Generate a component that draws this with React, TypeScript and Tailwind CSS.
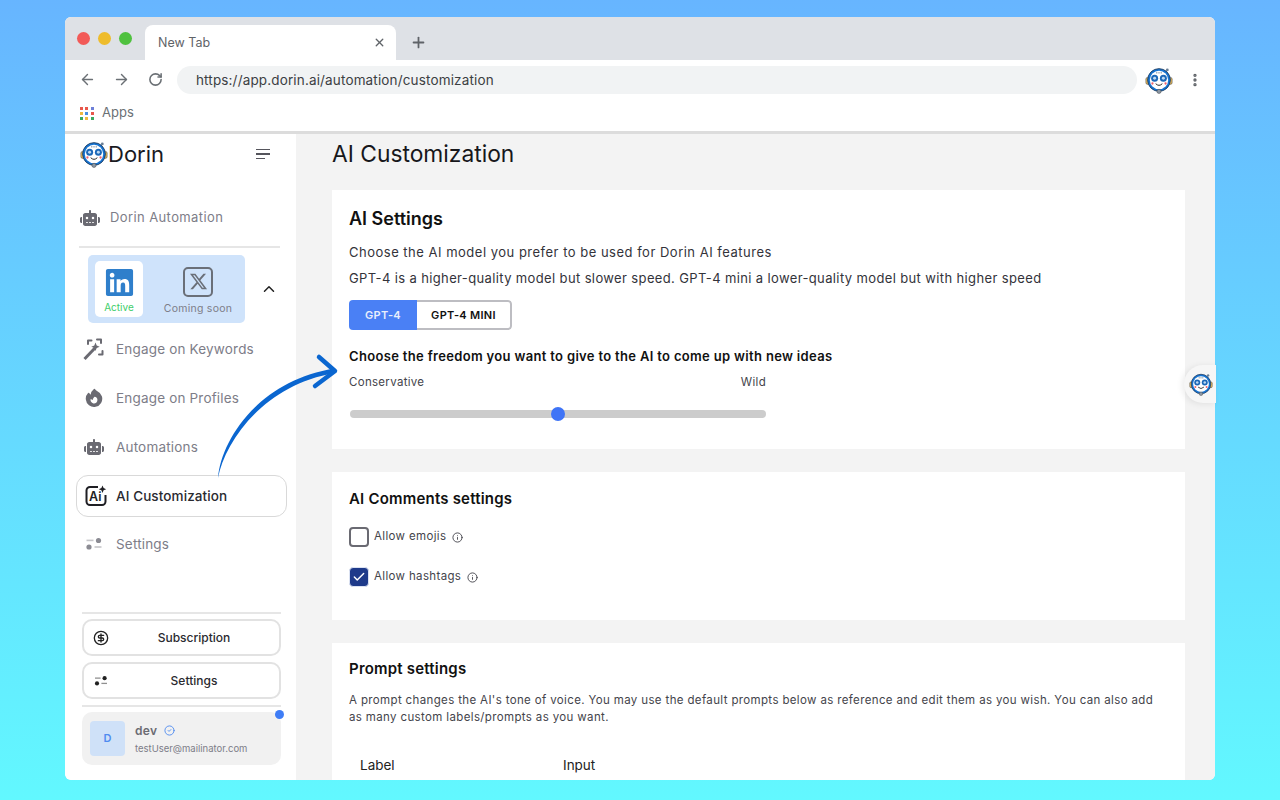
import React from "react";
import { ArrowLeft, ArrowRight, Check, ChevronUp, CircleCheck, CircleDollarSign, Info, MoreVertical, Plus, RotateCw, X } from "lucide-react";
import { FaLinkedin, FaRobot, FaXTwitter } from "react-icons/fa6";
import { HiFire } from "react-icons/hi2";

const font = "font-['Inter','Noto_Sans',sans-serif]";

const Robot = ({ size }: { size: number }) => (
  <svg width={size} height={size} viewBox="0 0 32 32" className="shrink-0">
    <circle cx="25.500" cy="4.500" r="1.600" fill="#6b7f95" />
    <rect x="1" y="13" width="4" height="8" rx="2" fill="#e8b95a" stroke="#444" strokeWidth="0.6" />
    <rect x="27" y="13" width="4" height="8" rx="2" fill="#e8b95a" stroke="#444" strokeWidth="0.6" />
    <circle cx="16" cy="16" r="13" fill="#1673d1" stroke="#1c3a5e" strokeWidth="1" />
    <circle cx="16" cy="16" r="10.500" fill="#fff" />
    <circle cx="13.500" cy="7.800" r="0.700" fill="#44607c" />
    <circle cx="16" cy="7.800" r="0.700" fill="#44607c" />
    <circle cx="18.500" cy="7.800" r="0.700" fill="#44607c" />
    <circle cx="11" cy="14" r="4" fill="#1c68b8" />
    <circle cx="21" cy="14" r="4" fill="#1c68b8" />
    <circle cx="11" cy="14" r="1.700" fill="#bcd8f2" />
    <circle cx="21" cy="14" r="1.700" fill="#bcd8f2" />
    <circle cx="8.500" cy="20" r="1.300" fill="#f0616d" />
    <circle cx="23.500" cy="20" r="1.300" fill="#f0616d" />
    <path d="M12.500 20.500 Q16 24 19.500 20.500" fill="none" stroke="#222" strokeWidth="1.100" strokeLinecap="round" />
    <circle cx="16" cy="29" r="2.400" fill="#8b98a6" stroke="#444" strokeWidth="0.6" />
  </svg>
);

const SettingsGlyph = ({ color, size = 20 }: { color: string; size?: number }) => (
  <svg width={size} height={size} viewBox="0 0 20 20" className="shrink-0">
    <circle cx="14.500" cy="6.500" r="2.600" fill={color} />
    <circle cx="5" cy="13" r="2.600" fill={color} />
    <rect x="2.500" y="5.600" width="7" height="1.600" fill={color} opacity="0.5" />
    <rect x="10.500" y="12.200" width="7" height="1.600" fill={color} opacity="0.5" />
  </svg>
);

const WandGlyph = () => (
  <svg width="24" height="24" viewBox="0 0 24 24" fill="none" stroke="#6a6a72" className="shrink-0">
    <path d="M2.500 22 L13 11" strokeWidth="3" />
    <path d="M6 7V3.500H9.500M15 2.500h4V6M20.500 14v3.500H17" strokeWidth="2" strokeLinecap="round" strokeLinejoin="round" />
    <path d="M13.500 5.500l1.200 3 3 1.200-3 1.200-1.200 3-1.200-3-3-1.200 3-1.200z" fill="#6a6a72" stroke="none" />
  </svg>
);

const AiGlyph = () => (
  <svg width="22" height="22" viewBox="0 0 22 22" fill="none" className="shrink-0">
    <path d="M13 2H5a3.500 3.500 0 0 0-3.500 3.500v11A3.500 3.500 0 0 0 5 20h12a3.500 3.500 0 0 0 3.500-3.500V10" stroke="#1f1f24" strokeWidth="2" />
    <path d="M17.500 0.500l1.100 2.600 2.600 1.100-2.600 1.100-1.100 2.600-1.100-2.600-2.600-1.100 2.600-1.100z" fill="#1f1f24" />
    <text x="4" y="16" fontSize="12.500" fontWeight="600" fill="#1f1f24" fontFamily="Inter">Ai</text>
  </svg>
);

const AppsGrid = () => {
  const colors = ["#e8574c", "#e8574c", "#6d7fd8", "#f1b93e", "#4a90e2", "#e8574c", "#3aa860", "#f1b93e", "#3aa860"];
  return (
    <div className="grid grid-cols-3 gap-[2px] w-[14px]">
      {colors.map((c, i) => (
        <span key={i} className="w-[3px] h-[3px]" style={{ backgroundColor: c }} />
      ))}
    </div>
  );
};

const NavItem = ({ icon, label, mt }: { icon: React.ReactNode; label: string; mt: string }) => (
  <div className={`flex items-center gap-[11px] h-[26px] pl-[17px] ${mt}`}>
    <span className="w-[23px] flex justify-center">{icon}</span>
    <span className="text-[13.500px] text-[#7d7d88] tracking-[0.18px]">{label}</span>
  </div>
);

const Sidebar = () => (
  <aside className="w-[231px] shrink-0 bg-white flex flex-col rounded-bl-[6px]">
    <div className="flex items-center justify-between h-[40px] pl-[15px] pr-[26px]">
      <div className="flex items-center">
        <Robot size={28} />
        <span className="text-[22px] text-[#1a1a1f]">Dorin</span>
      </div>
      <div className="flex flex-col gap-[3px] items-start w-[14px]">
        <span className="w-[14px] h-[1.500px] bg-[#55555c]" />
        <span className="w-[14px] h-[1.500px] bg-[#55555c]" />
        <span className="w-[9px] h-[1.500px] bg-[#55555c]" />
      </div>
    </div>
    <div className="flex items-center gap-[10px] pl-[15px] h-[26px] mt-[31px]">
      <FaRobot className="text-[#6a6a72] text-[20px]" />
      <span className="text-[13px] text-[#7d7d88] tracking-[0.4px]">Dorin Automation</span>
    </div>
    <div className="ml-[14px] mr-[16px] mt-[15px] h-[2px] bg-[#e6e6e6]" />
    <div className="flex items-center mt-[7px] pl-[23px]">
      <div className="w-[157px] h-[68px] rounded-[5px] bg-[#cfe3fb] flex items-center pl-[7px]">
        <div className="w-[48px] h-[56px] bg-white rounded-[5px] flex flex-col items-center pt-[6px]">
          <FaLinkedin className="text-[#2f7fcb] text-[31px] leading-none" />
          <span className="text-[10px] text-[#3fce6a] mt-[2px]">Active</span>
        </div>
        <div className="flex-1 flex flex-col items-center pt-[5px] ml-[8px]">
          <div className="w-[30px] h-[30px] rounded-[5px] border-2 border-[#6a6f78] flex items-center justify-center">
            <FaXTwitter className="text-[#6a6f78] text-[19px]" />
          </div>
          <span className="text-[10.500px] text-[#7d7d88] mt-[4px] tracking-[0.25px]">Coming soon</span>
        </div>
      </div>
      <ChevronUp className="ml-[15px] text-[#222] w-[18px] h-[18px]" />
    </div>
    <NavItem icon={<WandGlyph />} label="Engage on Keywords" mt="mt-[13px]" />
    <NavItem icon={<HiFire className="text-[#6a6a72] text-[22px]" />} label="Engage on Profiles" mt="mt-[23px]" />
    <NavItem icon={<FaRobot className="text-[#6a6a72] text-[20px]" />} label="Automations" mt="mt-[23px]" />
    <div className="ml-[11px] mr-[9px] mt-[15px] h-[42px] rounded-[12px] border border-[#d9d9d9] flex items-center gap-[9px] pl-[8px]">
      <AiGlyph />
      <span className="text-[13.500px] font-medium text-[#2a2a30] tracking-[0.1px]">AI Customization</span>
    </div>
    <NavItem icon={<SettingsGlyph color="#8b8b93" />} label="Settings" mt="mt-[14px]" />
    <div className="ml-[17px] mr-[15px] mt-[55px] h-[2px] bg-[#e6e6e6]" />
    <div className="ml-[17px] mr-[15px] mt-[5px] h-[37px] rounded-[10px] border-2 border-[#e2e2e2] flex items-center relative justify-center">
      <CircleDollarSign className="absolute left-[9px] w-[16px] h-[16px] text-[#222]" />
      <span className="text-[12px] font-medium text-[#2a2a30] ml-[25px]">Subscription</span>
    </div>
    <div className="ml-[17px] mr-[15px] mt-[6px] h-[37px] rounded-[10px] border-2 border-[#e2e2e2] flex items-center relative justify-center">
      <span className="absolute left-[9px] flex"><SettingsGlyph color="#222" size={16} /></span>
      <span className="text-[12px] font-medium text-[#2a2a30] ml-[25px]">Settings</span>
    </div>
    <div className="ml-[17px] mr-[15px] mt-[6px] h-[2px] bg-[#e6e6e6]" />
    <div className="ml-[17px] mr-[15px] mt-[5px] h-[53px] rounded-[10px] bg-[#f1f1f1] flex items-center gap-[10px] pl-[8px] relative">
      <div className="w-[35px] h-[35px] rounded-[4px] bg-[#cfe1f8] flex items-center justify-center text-[11px] font-semibold text-[#4f8bf0]">D</div>
      <div className="flex flex-col">
        <div className="flex items-center gap-[7px] mt-[1px]">
          <span className="text-[12px] font-semibold text-[#6b6b73] tracking-[0.3px]">dev</span>
          <CircleCheck className="w-[11px] h-[11px] text-[#4f8bf0]" />
        </div>
        <span className="text-[9.500px] text-[#7d7d88] mt-[2px]">testUser@mailinator.com</span>
      </div>
      <span className="absolute right-[-3px] top-[-2px] w-[9px] h-[9px] rounded-full bg-[#3f7df6]" />
    </div>
  </aside>
);

const Main = () => (
  <main className="flex-1 bg-[#f3f3f3] pl-[36px] pr-[30px] overflow-hidden">
    <h1 className="text-[22.800px] leading-[36px] text-[#17171b] mt-[2px]">AI Customization</h1>
    <section className="bg-white mt-[18px] h-[259px] px-[17px] pt-[17px]">
      <h2 className="text-[18px] leading-[24px] font-semibold text-[#111]">AI Settings</h2>
      <p className="text-[13px] leading-[20px] text-[#33333a] mt-[11px] tracking-[0.5px]">Choose the AI model you prefer to be used for Dorin AI features</p>
      <p className="text-[13px] leading-[20px] text-[#33333a] mt-[6px] tracking-[0.37px]">GPT-4 is a higher-quality model but slower speed. GPT-4 mini a lower-quality model but with higher speed</p>
      <div className="flex mt-[12px] w-[163px] h-[30px] rounded-[4px] overflow-hidden">
        <div className="w-[68px] bg-[#4a80f5] flex items-center justify-center text-[11px] font-semibold text-[#e8eefc] tracking-[0.3px]">GPT-4</div>
        <div className="flex-1 border-2 border-l-0 border-[#bdbdc2] rounded-r-[4px] flex items-center justify-center text-[11px] font-semibold text-[#111] tracking-[0.3px]">GPT-4 MINI</div>
      </div>
      <p className="text-[13px] leading-[20px] font-semibold text-[#111] mt-[16px] tracking-[0.33px]">Choose the freedom you want to give to the AI to come up with new ideas</p>
      <div className="flex justify-between w-[417px] mt-[8px] text-[11.500px] leading-[16px] text-[#44444b] tracking-[0.3px]">
        <span>Conservative</span>
        <span>Wild</span>
      </div>
      <div className="w-[416px] h-[8px] ml-[1px] mt-[20px] rounded-full bg-[#cccccc] relative">
        <span className="absolute left-[201px] top-[-3px] w-[14px] h-[14px] rounded-full bg-[#3f74f6]" />
      </div>
    </section>
    <section className="bg-white mt-[23px] h-[148px] px-[17px] pt-[16px]">
      <h2 className="text-[15px] leading-[22px] font-semibold text-[#111] tracking-[0.2px]">AI Comments settings</h2>
      <div className="flex items-center mt-[17px] h-[20px]">
        <span className="w-[20px] h-[20px] rounded-[4px] border-2 border-[#6a6a72]" />
        <span className="text-[11.500px] text-[#44444b] ml-[5px] tracking-[0.35px]">Allow emojis</span>
        <Info className="w-[11px] h-[11px] text-[#44444b] ml-[6px]" />
      </div>
      <div className="flex items-center mt-[20px] h-[20px]">
        <span className="w-[20px] h-[20px] rounded-[4px] bg-[#1e3a8a] flex items-center justify-center border border-[#dbe2f2]">
          <Check className="w-[14px] h-[14px] text-white" strokeWidth={2.500} />
        </span>
        <span className="text-[11.500px] text-[#44444b] ml-[5px] tracking-[0.35px]">Allow hashtags</span>
        <Info className="w-[11px] h-[11px] text-[#44444b] ml-[6px]" />
      </div>
    </section>
    <section className="bg-white mt-[23px] h-[200px] px-[17px] pt-[15px]">
      <h2 className="text-[15px] leading-[22px] font-semibold text-[#111] tracking-[0.2px]">Prompt settings</h2>
      <p className="text-[11.500px] leading-[17px] text-[#44444b] mt-[12px] pr-[10px] tracking-[0.36px]">A prompt changes the AI's tone of voice. You may use the default prompts below as reference and edit them as you wish. You can also add as many custom labels/prompts as you want.</p>
      <div className="flex text-[13.500px] text-[#222] mt-[29px]">
        <span className="ml-[11px] w-[203px]">Label</span>
        <span>Input</span>
      </div>
    </section>
  </main>
);

export default function App() {
  return (
    <div className={`w-[1280px] h-[800px] overflow-hidden bg-gradient-to-b from-[#67b5ff] to-[#62f8ff] pt-[17px] pl-[65px] relative ${font}`}>
      <div className="w-[1150px] h-[763px] bg-white rounded-[6px] overflow-hidden flex flex-col">
        <div className="h-[43px] bg-[#dee1e6] flex items-end shrink-0">
          <div className="flex items-center gap-[8px] pl-[12px] h-full">
            <span className="w-[13px] h-[13px] rounded-full bg-[#f25a58]" />
            <span className="w-[13px] h-[13px] rounded-full bg-[#eebc2c]" />
            <span className="w-[13px] h-[13px] rounded-full bg-[#4fc13f]" />
          </div>
          <div className="w-[251px] h-[35px] bg-white rounded-t-[8px] ml-[13px] flex items-center justify-between pl-[13px] pr-[10px]">
            <span className="text-[12.500px] text-[#5f6368] pt-[1px]">New Tab</span>
            <X className="w-[13px] h-[13px] text-[#5f6368]" strokeWidth={2.500} />
          </div>
          <Plus className="w-[17px] h-[17px] text-[#5f6368] ml-[14px] mb-[9px]" strokeWidth={2.500} />
        </div>
        <div className="h-[38px] bg-white flex items-center pl-[14px] pr-[12px] shrink-0 pt-[1px]">
          <ArrowLeft className="w-[17px] h-[17px] text-[#6b7075]" />
          <ArrowRight className="w-[17px] h-[17px] text-[#6b7075] ml-[17px]" />
          <RotateCw className="w-[15px] h-[15px] text-[#6b7075] ml-[18px]" strokeWidth={2.500} />
          <div className="w-[961px] h-[28px] rounded-full bg-[#f1f3f4] ml-[14px] flex items-center pl-[19px] pt-[1px] text-[13.500px] text-[#3c4043] tracking-[0.15px]">https://app.dorin.ai/automation/customization</div>
          <div className="ml-[8px]"><Robot size={28} /></div>
          <MoreVertical className="w-[16px] h-[16px] text-[#5f6368] ml-[14px]" strokeWidth={3} />
        </div>
        <div className="h-[33px] bg-white flex items-center gap-[8px] pl-[15px] shrink-0 pb-[3px]">
          <AppsGrid />
          <span className="text-[13px] text-[#6b7075]">Apps</span>
        </div>
        <div className="h-[3px] bg-[#dcdcdc] shrink-0" />
        <div className="flex flex-1 min-h-0">
          <Sidebar />
          <Main />
        </div>
      </div>
      <svg width="135" height="140" viewBox="0 0 135 140" className="absolute left-[210px] top-[350px]">
        <path d="M8 128 C 11 90, 49 30, 125 18.500 L125 23 C 53 35, 15 92, 8 128 Z" fill="#0a66d0" />
        <path d="M109 7 L125 21 L105 36" fill="none" stroke="#0a66d0" strokeWidth="4.500" strokeLinecap="round" strokeLinejoin="round" />
      </svg>
      <div className="absolute left-[1184px] top-[365px] w-[32px] h-[38px] bg-[#f6f6f6] rounded-l-full flex items-center justify-end pr-[3px] shadow-[-2px_1px_6px_rgba(0,0,0,0.08)]">
        <Robot size={24} />
      </div>
    </div>
  );
}
